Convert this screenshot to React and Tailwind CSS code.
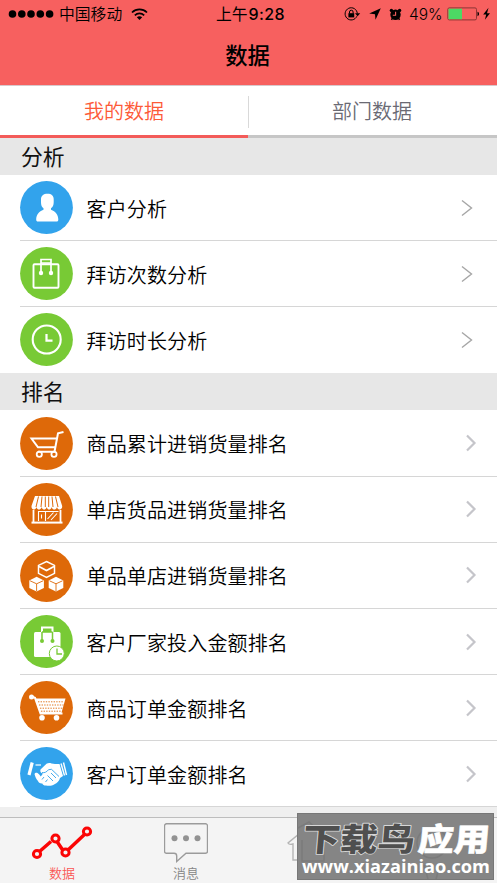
import React from "react";

const BLUE = "#32a3ec";
const GREEN = "#78ca35";
const ORANGE = "#de6909";

function Disc({ color, children }) {
  return (
    <svg width="53" height="53" viewBox="0 0 53 53" className="shrink-0" fill="none" stroke="white">
      <circle cx="26.5" cy="26.5" r="26.4" fill={color} stroke="none" />
      {children}
    </svg>
  );
}

function PersonIcon() {
  return (
    <Disc color={BLUE}>
      <path
        stroke="none"
        fill="white"
        d="M27.5 12.8c4 0 6.2 2 6.2 5.5v3c0 3-1 4.700-2.700 6v1.500c4.500 1.600 7.300 5 7.300 9.700 0 1.500-.6 2-1.800 2H18c-1.200 0-1.800-.5-1.800-2 0-4.700 2.800-8.100 7.300-9.700v-1.500c-1.700-1.300-2.500-3-2.500-6v-3c0-3.500 2.500-5.500 6.500-5.500z"
      />
    </Disc>
  );
}

function BagIcon() {
  return (
    <Disc color={GREEN}>
      <rect x="13.500" y="17.300" width="25" height="23.500" rx="1" strokeWidth="1.900" />
      <path d="M21 26V12.500h10V26M21 16h10" strokeWidth="1.700" />
      <circle cx="21" cy="26" r="2.200" fill="white" stroke="none" />
      <circle cx="31" cy="26" r="2.200" fill="white" stroke="none" />
    </Disc>
  );
}

function ClockIcon() {
  return (
    <Disc color={GREEN}>
      <circle cx="26.700" cy="26.500" r="14" strokeWidth="2.100" />
      <path d="M26.500 21v6.700h6" strokeWidth="2.200" />
    </Disc>
  );
}

function CartIcon() {
  return (
    <Disc color={ORANGE}>
      <path d="M43.500 15l-5.500 1.300-3.500 18.500H18" strokeWidth="2" />
      <path d="M37 21.500H11.500l6.500 8.800h17.500" strokeWidth="2" />
      <circle cx="19.300" cy="37.300" r="2.600" strokeWidth="1.800" />
      <circle cx="34" cy="37.300" r="2.600" strokeWidth="1.800" />
    </Disc>
  );
}

function ShopIcon() {
  return (
    <Disc color={ORANGE}>
      <path
        stroke="none"
        fill="white"
        d="M15 13h24l3.200 10c.2 2-1 3.500-2.500 3.500s-2.500-1-2.700-2.500c-.3 1.600-1.300 2.500-2.700 2.500s-2.400-1-2.600-2.500c-.3 1.600-1.200 2.500-2.500 2.500s-2.300-1-2.500-2.500c-.3 1.600-1.200 2.500-2.500 2.500s-2.400-1-2.600-2.500c-.3 1.600-1.200 2.500-2.600 2.500s-2.300-1-2.500-2.500c-.3 1.600-1.200 2.500-2.700 2.500-1.500 0-2.500-1.500-2.300-3.500z"
      />
      <path stroke={ORANGE} strokeWidth="1" d="M18.500 13.500L16 24M22 13.500L21 24M25.300 13.500v10.500M28.700 13.500v10.500M32 13.500l1 10.500M35.500 13.500L38 24" />
      <path strokeWidth="1.800" d="M13.500 27v12M40.500 27v12" />
      <path strokeWidth="2" d="M11.500 39.600h31" />
      <path strokeWidth="1.100" d="M18.500 38V28.500h7V38M25.500 28.500h13M21.500 31.500v4M27.500 36l6-6.500M31 37l6-6.500" />
    </Disc>
  );
}

function Cube({ x, y }) {
  return (
    <g transform={`translate(${x} ${y})`}>
      <path d="M0-7.300L7.300-3.500V4L0 7.600-7.300 4V-3.500z" fill="white" stroke="none" />
      <path d="M-6.500-3.200L0-.2l6.500-3M0-.2V7" stroke={ORANGE} strokeWidth="0.900" />
    </g>
  );
}

function CubesIcon() {
  return (
    <Disc color={ORANGE}>
      <path d="M26.500 12.500l8 3.900v8l-8 4-8-4v-8z" strokeWidth="1.500" />
      <path d="M19 17.500l7.500 4 7.500-4" strokeWidth="1.700" />
      <Cube x={16.600} y={35} />
      <Cube x={36} y={35} />
    </Disc>
  );
}

function BagClockIcon() {
  return (
    <Disc color={GREEN}>
      <rect x="14" y="17" width="26.500" height="25" rx="1.500" fill="white" stroke="none" />
      <path d="M22 18v-5.500h10.500V18" strokeWidth="2" />
      <path d="M22 26v-9M32.500 26v-9M22 17h10.500" stroke={GREEN} strokeWidth="1.500" />
      <circle cx="22" cy="26" r="2" fill={GREEN} stroke="none" />
      <circle cx="32.500" cy="26" r="2" fill={GREEN} stroke="none" />
      <circle cx="36.800" cy="38.500" r="7.500" fill="white" stroke={GREEN} strokeWidth="1" />
      <path d="M37 33.500V39h5" stroke={GREEN} strokeWidth="1.300" />
    </Disc>
  );
}

function MeshCartIcon() {
  return (
    <Disc color={ORANGE}>
      <circle cx="11.500" cy="16" r="2.500" fill="white" stroke="none" />
      <path d="M11.500 15.500l3.500 1.300 5.500 15.700h22" strokeWidth="2" />
      <path d="M15.500 17.500h30l-4.200 15H21z" fill="white" stroke="none" />
      <path
        d="M18 20.800h26M19 24h24.500M20 27.200h22.500M21 30.200h20.500"
        stroke={ORANGE}
        strokeWidth="0.900"
        strokeDasharray="1.400 1.200"
      />
      <circle cx="22" cy="36.800" r="2.800" fill="white" stroke="none" />
      <circle cx="36.500" cy="36.800" r="2.800" fill="white" stroke="none" />
    </Disc>
  );
}

function HandshakeIcon() {
  return (
    <Disc color={BLUE}>
      <path d="M12.200 15.500L9 28" strokeWidth="3.200" />
      <path d="M41 16.500l3.500 12" strokeWidth="1.400" />
      <path d="M43.500 15.500l3 12.500" strokeWidth="1.400" />
      <path d="M15.500 18h5.500" strokeWidth="1.200" />
      <path
        stroke="none"
        fill="white"
        d="M20.500 22.500L26.500 16.800c1.500-.8 3-.9 5-.4l3.500.7 4.500-.2 3.500 12-3 2c-.6 3-3 5-5.500 6.300-2.500 1.700-5.500 2-8.500 1.300-1.500.2-3-.5-3.700-2-2.300.2-3.800-.8-4.300-2.500-1.700-2-3-4.500-3.500-7 .5-1.300 2-1.700 3-1 1.300.8 2.300 2.300 3.300 3.600l2.200-3.200c-1.700.2-3.300-1.600-2.500-3.900z"
      />
      <path d="M22 25.500c2.500.8 5-.8 6.500-2.800l3-.4 7.500 7.200M27.500 28.500l5.500 5.500M31 26l5 5M22 32.500l2-2.500M25.500 35l2-2.500" stroke={BLUE} strokeWidth="0.900" />
    </Disc>
  );
}

const analysis = [
  { label: "客户分析", Icon: PersonIcon },
  { label: "拜访次数分析", Icon: BagIcon },
  { label: "拜访时长分析", Icon: ClockIcon },
];

const ranking = [
  { label: "商品累计进销货量排名", Icon: CartIcon },
  { label: "单店货品进销货量排名", Icon: ShopIcon },
  { label: "单品单店进销货量排名", Icon: CubesIcon },
  { label: "客户厂家投入金额排名", Icon: BagClockIcon },
  { label: "商品订单金额排名", Icon: MeshCartIcon },
  { label: "客户订单金额排名", Icon: HandshakeIcon },
];

function ThinChevron() {
  return (
    <svg width="12" height="18" viewBox="0 0 12 18" className="mr-[24px] mt-px" fill="none" stroke="#a6a6a6" strokeWidth="1.400">
      <path d="M1 1.500L10.500 9 1 16.500" />
    </svg>
  );
}

function BoldChevron() {
  return (
    <svg width="12" height="18" viewBox="0 0 12 18" className="mr-[20px]" fill="none" stroke="#c5c5ca" strokeWidth="2.200">
      <path d="M2 1.500L9.500 9 2 16.500" />
    </svg>
  );
}

function Row({ label, Icon, Chevron, last }) {
  return (
    <div className="pl-5">
      <div className={"flex h-[66.170px] items-center border-b " + (last ? "border-transparent" : "border-[#d6d6d6]")}>
        <Icon />
        <span className="ml-[13.500px] grow pt-[4px] text-[20px] font-[350] leading-[30px] tracking-[0.150px] text-black">{label}</span>
        <Chevron />
      </div>
    </div>
  );
}

function SectionTitle({ children }) {
  return (
    <h2 className="flex h-[37px] items-center bg-[#e7e7e7] pl-[21px] pt-[3px] text-[21.800px] font-normal leading-[34px] text-[#111]">
      {children}
    </h2>
  );
}

function StatusBar() {
  return (
    <div className="flex h-[28px] items-center text-[15.800px] text-black">
      <div className="flex w-[216px] items-center pl-[8px]">
        <svg width="46" height="10" viewBox="0 0 46 10" fill="black">
          <circle cx="4.500" cy="5" r="3.800" />
          <circle cx="13.800" cy="5" r="3.800" />
          <circle cx="23" cy="5" r="3.800" />
          <circle cx="32.300" cy="5" r="3.800" />
          <circle cx="41.600" cy="5" r="3.800" />
        </svg>
        <span className="ml-[5px] pt-px font-[350]">中国移动</span>
        <svg width="17" height="13" viewBox="0 0 17 13" className="ml-[9px]" fill="none" stroke="black" strokeWidth="1.700">
          <path d="M1 4.500c4.300-4.100 10.700-4.100 15 0" />
          <path d="M3.800 7.300c2.700-2.500 6.700-2.500 9.400 0" />
          <path d="M8.500 12L5.800 9.300c1.600-1.400 3.800-1.400 5.400 0z" fill="black" stroke="none" />
        </svg>
      </div>
      <span className="w-[128px] whitespace-nowrap pt-px">
        上午<span className="ml-px font-['Inter'] text-[16px] font-medium tracking-[0.400px]">9:28</span>
      </span>
      <svg width="17" height="14" viewBox="0 0 17 14" fill="none" stroke="black">
        <path d="M12.800 9.300A6.100 6.100 0 1 1 13.300 6.500" strokeWidth="1" />
        <path d="M11 6.300h5.200l-2.600 3z" fill="black" stroke="none" />
        <rect x="4.400" y="6.200" width="5.800" height="4.200" fill="black" stroke="none" />
        <path d="M5.500 6.500V5a1.800 1.800 0 0 1 3.600 0v1.500" strokeWidth="1" />
      </svg>
      <svg width="12" height="12" viewBox="0 0 12 12" className="ml-[8px]" fill="black">
        <path d="M11.800.3L6.500 11.800 6 6.200.2 5.600z" />
      </svg>
      <svg width="13" height="13" viewBox="0 0 13 13" className="ml-[8px]">
        <circle cx="6.500" cy="6.800" r="5.200" />
        <circle cx="2.400" cy="2.400" r="1.700" />
        <circle cx="10.600" cy="2.400" r="1.700" />
        <path d="M3.500 10l-1 1.800M9.500 10l1 1.800" stroke="black" strokeWidth="1.500" />
        <path d="M6.600 3.800v3.400H3.800" fill="none" stroke="#f7605f" strokeWidth="1.100" />
      </svg>
      <span className="ml-[7px] w-[38px] pt-px font-['Inter'] text-[15.500px] font-light">49%</span>
      <svg width="43" height="14" viewBox="0 0 43 14">
        <rect x="0.800" y="0.900" width="28.700" height="12" rx="1.500" fill="none" stroke="#8c3535" strokeWidth="1" />
        <rect x="1.500" y="1.700" width="13.500" height="10.500" fill="#4cd964" />
        <path d="M30.500 4.800c2 .5 2 3.900 0 4.400z" />
        <path d="M41.500.8l-5.300 6.700h3l-1.300 5.300L43 6.200h-3z" />
      </svg>
    </div>
  );
}

function Watermark() {
  return (
    <div className="absolute left-[297px] top-[813px] h-[67px] w-[197px] border border-[#777] bg-[#858585]">
      <svg width="195" height="65" viewBox="298 814 195 65" className="block overflow-visible font-['Noto_Sans_CJK_SC',sans-serif]">
        <g fill="none" stroke="#7b7b7b" strokeWidth="1.500">
          <path d="M298 828l11-6 15 14v25h-22v-21" />
          <circle cx="432" cy="843" r="15" />
          <path d="M424 865l4 14M440 865l-4 14" />
        </g>
        <g fontSize="32" fontWeight="900" paintOrder="stroke" strokeLinejoin="round">
          <text transform="translate(302 851) skewX(-5)" x="0" y="0" textLength="112" lengthAdjust="spacingAndGlyphs" fill="#4f4f4f" stroke="#d6d6d6" strokeWidth="1.800">下载鸟</text>
          <text transform="translate(417 851) skewX(-5)" x="0" y="0" textLength="72" lengthAdjust="spacingAndGlyphs" fill="white" stroke="white" strokeWidth="0.500">应用</text>
        </g>
        <text x="302" y="873" textLength="188" lengthAdjust="spacingAndGlyphs" fontSize="18.500" fontWeight="700" fill="white" className="font-['Open_Sans',sans-serif]">
          www.xiazainiao.com
        </text>
      </svg>
    </div>
  );
}

export default function App() {
  return (
    <div className="relative flex h-[883px] w-[497px] flex-col overflow-hidden bg-[#efefef] font-['Liberation_Sans','Noto_Sans_CJK_SC',sans-serif]">
      <header className="h-[86px] shrink-0 border-b border-[#d8c8cc] bg-[#f7605f]">
        <StatusBar />
        <h1 className="pt-px pr-[2px] text-center text-[22.300px] font-medium leading-[56px] text-black">数据</h1>
      </header>
      <nav className="flex h-[52px] shrink-0 bg-white text-[20px] font-[350] leading-[52px]">
        <div className="h-[52px] w-[248px] border-b-[3px] border-[#f35b59] text-center text-[#fd5a38]">我的数据</div>
        <div className="flex h-[52px] grow border-b-[3px] border-[#c6c6c6] text-[#6a6a74]">
          <span className="mt-[10px] h-[32px] w-px bg-[#d9d9d9]" />
          <span className="grow pr-[2px] text-center">部门数据</span>
        </div>
      </nav>
      <main className="shrink-0">
        <SectionTitle>分析</SectionTitle>
        <div className="bg-white">
          {analysis.map((item, i) => (
            <Row key={item.label} {...item} Chevron={ThinChevron} last={i === 2} />
          ))}
        </div>
        <SectionTitle>排名</SectionTitle>
        <div className="bg-white">
          {ranking.map((item) => (
            <Row key={item.label} {...item} Chevron={BoldChevron} />
          ))}
        </div>
      </main>
      <footer className="mt-auto flex h-[66px] shrink-0 border-t border-[#bdbdbd] bg-[#f4f4f4] text-[13px] font-[350] leading-[16px]">
        <div className="flex w-[124px] flex-col items-center pt-[7px] text-[#fa5553]">
          <svg width="62" height="35" viewBox="0 0 62 35" fill="none" stroke="#fb0505" strokeWidth="3">
            <path d="M8.500 26.500L20 16.500M26 16.500l6 9M37 25L54 9" strokeWidth="3.500" />
            <circle cx="6" cy="29" r="3.600" />
            <circle cx="24.500" cy="13.500" r="3.600" />
            <circle cx="34.500" cy="27.500" r="3.600" />
            <circle cx="56" cy="6.500" r="3.600" />
          </svg>
          <span className="mt-[6px]">数据</span>
        </div>
        <div className="flex w-[124px] flex-col items-center pt-[5px] text-[#858585]">
          <svg width="44" height="40" viewBox="0 0 44 40" fill="none" stroke="#9b9b9b" strokeWidth="1.400">
            <path d="M2.500.8h39a2 2 0 0 1 2 2v25.500a2 2 0 0 1-2 2H22l-9.300 8.200v-5.500q0-2.700-2.700-2.700H2.500a2 2 0 0 1-2-2V2.800a2 2 0 0 1 2-2z" />
            <g fill="#929292" stroke="none">
              <circle cx="10.500" cy="15.300" r="3" />
              <circle cx="22" cy="15.300" r="3" />
              <circle cx="33.500" cy="15.300" r="3" />
            </g>
          </svg>
          <span className="mt-[3px]">消息</span>
        </div>
        <div className="flex w-[124px] flex-col items-center pt-[5px]">
          <svg width="46" height="40" viewBox="0 0 46 40" fill="none" stroke="#b5b5b5" strokeWidth="1.400">
            <path d="M6 37V21q-4 1-5-1L23 2l21 19h-6v16z" />
          </svg>
        </div>
      </footer>
      <Watermark />
    </div>
  );
}
